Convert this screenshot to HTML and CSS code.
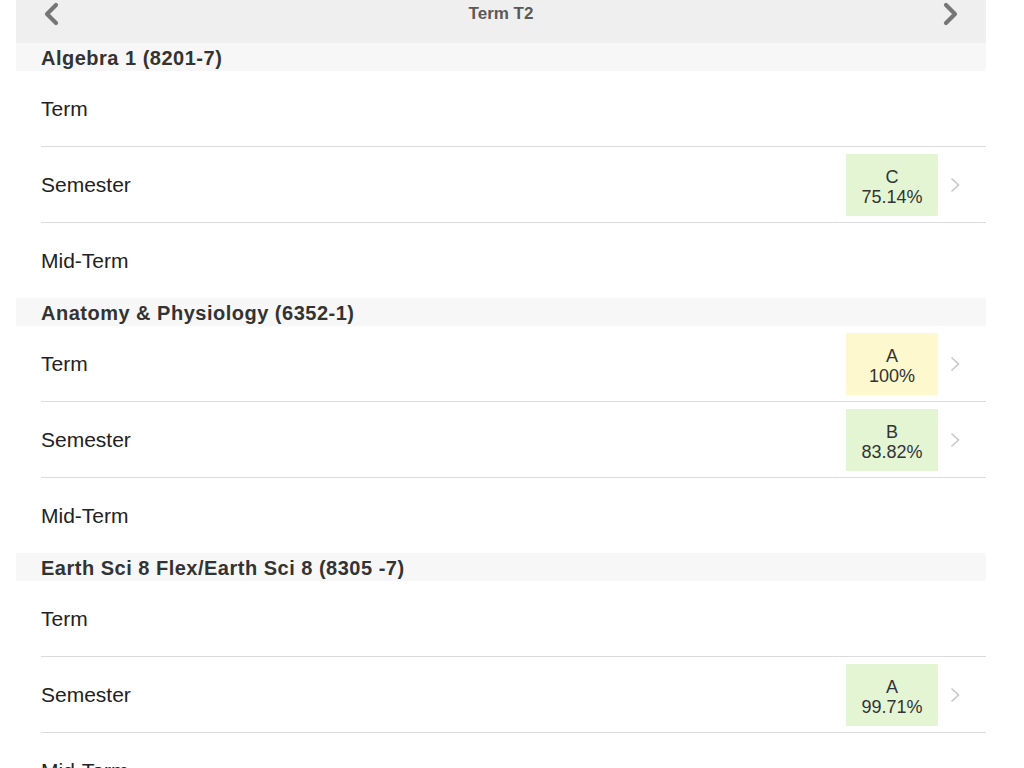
FILE: index.html
```html
<!DOCTYPE html>
<html>
<head>
<meta charset="utf-8">
<link rel="stylesheet" href="styles.css">
</head>
<body>
<div class="page">
  <div class="topbar">
    <svg class="nav-chev" width="16" height="24" viewBox="0 0 16 24"><polyline points="13,3 4,12 13,21" fill="none" stroke="#767676" stroke-width="4.2" stroke-linecap="round" stroke-linejoin="round"/></svg>
    <div class="title">Term T2</div>
    <svg class="nav-chev" width="16" height="24" viewBox="0 0 16 24"><polyline points="3,3 12,12 3,21" fill="none" stroke="#767676" stroke-width="4.2" stroke-linecap="round" stroke-linejoin="round"/></svg>
  </div>

  <div class="section">Algebra 1 (8201-7)</div>
  <div class="row sep"><span class="label">Term</span></div>
  <div class="row sep"><span class="label">Semester</span>
    <div class="badge green"><span>C</span><span>75.14%</span></div>
    <svg class="chev" width="10" height="16" viewBox="0 0 10 16"><polyline points="1.5,1.5 8.5,8 1.5,14.5" fill="none" stroke="#c7c7cc" stroke-width="1.6"/></svg>
  </div>
  <div class="row"><span class="label">Mid-Term</span></div>

  <div class="section">Anatomy &amp; Physiology (6352-1)</div>
  <div class="row sep"><span class="label">Term</span>
    <div class="badge yellow"><span>A</span><span>100%</span></div>
    <svg class="chev" width="10" height="16" viewBox="0 0 10 16"><polyline points="1.5,1.5 8.5,8 1.5,14.5" fill="none" stroke="#c7c7cc" stroke-width="1.6"/></svg>
  </div>
  <div class="row sep"><span class="label">Semester</span>
    <div class="badge green"><span>B</span><span>83.82%</span></div>
    <svg class="chev" width="10" height="16" viewBox="0 0 10 16"><polyline points="1.5,1.5 8.5,8 1.5,14.5" fill="none" stroke="#c7c7cc" stroke-width="1.6"/></svg>
  </div>
  <div class="row"><span class="label">Mid-Term</span></div>

  <div class="section">Earth Sci 8 Flex/Earth Sci 8 (8305 -7)</div>
  <div class="row sep"><span class="label">Term</span></div>
  <div class="row sep"><span class="label">Semester</span>
    <div class="badge green"><span>A</span><span>99.71%</span></div>
    <svg class="chev" width="10" height="16" viewBox="0 0 10 16"><polyline points="1.5,1.5 8.5,8 1.5,14.5" fill="none" stroke="#c7c7cc" stroke-width="1.6"/></svg>
  </div>
  <div class="row"><span class="label">Mid-Term</span></div>
</div>
</body>
</html>
```

FILE: styles.css
```css
html, body {
  margin: 0;
  padding: 0;
  background: #ffffff;
  overflow: hidden;
}
body {
  font-family: "Liberation Sans", Arial, sans-serif;
  color: #222;
}
.page {
  margin-left: 16px;
  width: 970px;
}
.topbar {
  height: 43px;
  background: #efefef;
  display: flex;
  align-items: flex-start;
  justify-content: space-between;
  padding: 2px 27px 0 27px;
  box-sizing: border-box;
}
.nav-chev {
  display: block;
}
.title {
  font-size: 17px;
  font-weight: bold;
  color: #5a5a5a;
  line-height: 24px;
  margin-top: 0;
}
.section {
  height: 28px;
  background: #f7f7f7;
  padding-left: 25px;
  font-size: 20px;
  font-weight: bold;
  letter-spacing: 0.5px;
  color: #333333;
  line-height: 30px;
}
.row {
  height: 75px;
  display: flex;
  align-items: center;
  margin-left: 25px;
  padding-right: 26px;
}
.row.sep {
  border-bottom: 1px solid #dcdce0;
}
.label {
  flex: 1;
  font-size: 21px;
  color: #222;
}
.badge {
  width: 92px;
  height: 62px;
  display: flex;
  flex-direction: column;
  align-items: center;
  justify-content: center;
  font-size: 18px;
  line-height: 20px;
  color: #333;
  margin-right: 12px;
  padding-top: 5px;
  box-sizing: border-box;
}
.badge.green {
  background: #e3f5d3;
}
.badge.yellow {
  background: #fdf8cd;
}
.chev {
  display: block;
}
```
